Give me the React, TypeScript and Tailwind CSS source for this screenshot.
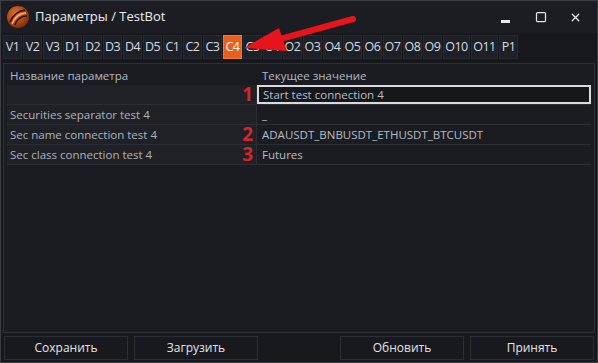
import { Square, X } from 'lucide-react'

const tabs = ['V1', 'V2', 'V3', 'D1', 'D2', 'D3', 'D4', 'D5', 'C1', 'C2', 'C3', 'C4', 'C5', 'O1', 'O2', 'O3', 'O4', 'O5', 'O6', 'O7', 'O8', 'O9', 'O10', 'O11', 'P1']

const rows = [
  { name: '', value: 'Start test connection 4', mark: '1', editing: true },
  { name: 'Securities separator test 4', value: '_', mark: '' },
  { name: 'Sec name connection test 4', value: 'ADAUSDT_BNBUSDT_ETHUSDT_BTCUSDT', mark: '2' },
  { name: 'Sec class connection test 4', value: 'Futures', mark: '3' },
]

function Logo() {
  return (
    <svg width="24" height="24" viewBox="0 0 24 24">
      <defs>
        <radialGradient id="lg" cx="0.4" cy="0.35" r="0.7">
          <stop offset="0" stopColor="#f0702a" />
          <stop offset="1" stopColor="#7a2a08" />
        </radialGradient>
      </defs>
      <circle cx="12" cy="12" r="11" fill="url(#lg)" />
      <path d="M4 17 C7 10 12 6 19 5" stroke="#2a1206" strokeWidth="1.6" fill="none" />
      <path d="M6 19 C9 12 14 8 20 8" stroke="#ffb07a" strokeWidth="1.4" fill="none" />
      <path d="M9 20 C11 14 15 11 21 11" stroke="#2a1206" strokeWidth="1.4" fill="none" />
    </svg>
  )
}

export default function App() {
  return (
    <div
      className="relative w-[598px] h-[363px] bg-[#16181c] text-[#c9ccd2] overflow-hidden border border-[#3a3d44]"
      style={{ fontFamily: '"Open Sans", "Noto Sans", sans-serif' }}
    >
      {/* Title bar */}
      <div className="h-[32px] flex items-center pl-[5px] bg-[#1b1d22]">
        <Logo />
        <span className="ml-[5px] text-[13px] text-[#eceef2]">Параметры / TestBot</span>
        <div className="ml-auto flex items-center h-full text-[#e6e8ec] pr-[4px]">
          <div className="w-[35px] flex justify-center">
            <div className="w-[9px] h-[3px] bg-[#e6e8ec] mt-[8px]" />
          </div>
          <div className="w-[35px] flex justify-center"><Square size={12} strokeWidth={2.5} /></div>
          <div className="w-[35px] flex justify-center"><X size={13} strokeWidth={2.5} /></div>
        </div>
      </div>

      {/* Tabs */}
      <div className="flex gap-px px-[2px] pt-[2px] h-[28px]">
        {tabs.map((t) => (
          <div
            key={t}
            className={
              t === 'C4'
                ? 'h-[24px] w-[19px] flex items-center justify-center text-[12.5px] tracking-[-0.5px] bg-[#e8601c] text-white border border-[#f07a38]'
                : t.length > 2
                  ? 'h-[24px] w-[27px] flex items-center justify-center text-[12.5px] tracking-[-0.5px] bg-[#1d2026] text-[#d8dbe0] border border-[#262930]'
                  : 'h-[24px] w-[19px] flex items-center justify-center text-[12.5px] tracking-[-0.5px] bg-[#1d2026] text-[#d8dbe0] border border-[#262930]'
            }
          >
            {t}
          </div>
        ))}
      </div>

      {/* Parameters panel */}
      <div className="mx-[2px] mt-[2px] h-[270px] border border-[#2c2f36] bg-[#1a1c21] px-[3px] pt-[3px]">
        <div className="flex h-[18px] items-center text-[11.5px] text-[#b4b8c0]">
          <div className="w-[250px] pl-[3px]">Название параметра</div>
          <div className="pl-[5px]">Текущее значение</div>
        </div>
        {rows.map((r, i) => (
          <div key={i} className="flex h-[20px] border-b border-[#2a2d33] text-[11.5px]">
            <div className="w-[250px] pl-[3px] flex items-center bg-[#1f2127] border-r border-[#2a2d33] text-[#aeb2ba]">
              {r.name}
              {r.mark && (
                <span className="ml-auto mr-[3px] text-[19px] h-[17px] leading-[17px] font-bold text-[#d3262a]">{r.mark}</span>
              )}
            </div>
            {r.editing ? (
              <div className="flex-1 flex items-center border-2 border-[#d8dadf] bg-[#15171b] pl-[4px] text-[#b8bcc4]">
                {r.value}
              </div>
            ) : (
              <div className="flex-1 flex items-center pl-[5px] text-[#b8bcc4]">{r.value}</div>
            )}
          </div>
        ))}
      </div>

      {/* Buttons */}
      <div className="flex px-[3px] mt-[3px] text-[12px] text-[#e2e4e8]">
        <div className="w-[124px] h-[24px] flex items-center justify-center bg-[#17191e] border border-[#2a2d33]">Сохранить</div>
        <div className="ml-[6px] w-[124px] h-[24px] flex items-center justify-center bg-[#17191e] border border-[#2a2d33]">Загрузить</div>
        <div className="ml-auto w-[124px] h-[24px] flex items-center justify-center bg-[#17191e] border border-[#2a2d33]">Обновить</div>
        <div className="ml-[6px] w-[124px] h-[24px] flex items-center justify-center bg-[#17191e] border border-[#2a2d33]">Принять</div>
      </div>

      {/* Red annotation arrow */}
      <svg className="absolute left-0 top-0 pointer-events-none" width="598" height="363">
        <line x1="352" y1="18" x2="272" y2="40" stroke="#e8141c" strokeWidth="6" strokeLinecap="round" />
        <polygon points="243,47 278,27 286,50" fill="#e8141c" />
      </svg>
    </div>
  )
}
